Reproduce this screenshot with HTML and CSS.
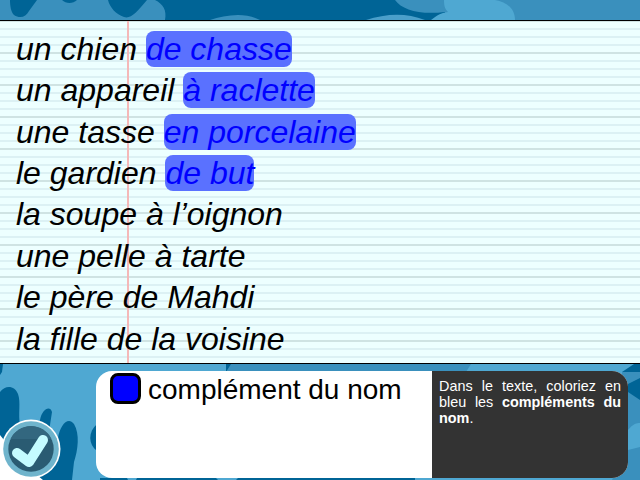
FILE: index.html
```html
<!DOCTYPE html>
<html>
   <head>
      <meta charset="UTF-8">
      <title>Compléments du nom</title>
      <link rel="stylesheet" href="styles.css">
   </head>
   <body>
      <svg class="camo" width="640" height="480" viewBox="0 0 640 480">
         <rect width="640" height="480" fill="#006496"/>
         <!-- top strip -->
         <path d="M0 0 L10 0 C10 6 11 12 14 15 C20 19 26 17 29 11 L37 0 L62 0 C66 4 73 4 77 0 L108 0 C110 8 116 14 124 17 C131 19 136 13 147 0 L155 0 C163 4 167 10 165 20 L0 20 Z" fill="#3a90bd"/>
         <path d="M210 20 C225 15 245 12 260 20 Z" fill="#3a90bd"/>
         <path d="M366 20 C385 14 405 12 425 20 Z" fill="#4a9fca"/>
         <path d="M395 0 C402 10 420 15 445 12 L445 20 L640 20 L640 0 Z" fill="#3a90bd"/>
         <path d="M444 0 C444 6 445 9 448 12 C440 13 438 15 431 20 L515 20 C515 8 506 2 495 0 Z" fill="#4fa8d2"/>
         <!-- bottom strip -->
         <rect y="364" width="640" height="116" fill="#4fa8d2"/>
         <path d="M0 392 C6 384 15 386 18 394 C21 402 18 414 20 425 L30 440 L38 437 L40 420 C42 409 50 405 52 412 L48 438 L58 438 C60 425 68 416 74 424 C80 434 78 450 74 462 L72 480 L0 480 Z" fill="#006496"/>
         <path d="M0 364 L3 364 L2 372 L0 375 Z" fill="#006496"/>
         <path d="M97 424 C88 432 88 444 97 451 Z" fill="#006496"/>
         <path d="M226 364 L432 364 L432 372 L226 372 Z" fill="#3a90bd"/>
         <path d="M226 372 L231 364 L226 364 Z" fill="#006496"/>
         <path d="M432 364 L471 364 L466 372 L432 372 Z" fill="#3a90bd"/>
         <path d="M100 478 L415 478 L415 480 L100 480 Z" fill="#006496"/>
         <path d="M127 478 L137 478 L136 480 L128 480 Z M216 478 L238 478 L236 480 L218 480 Z" fill="#4fa8d2"/>
         <path d="M612 480 L620 464 L640 400 L640 480 Z" fill="#3a90bd"/>
         <path d="M622 372 L640 372 L640 480 L622 480 Z" fill="#3a90bd"/>
         <path d="M622 372 L634 364 L640 364 L640 372 Z" fill="#006496"/>
         <path d="M628 384 L640 378 L640 400 L628 392 Z" fill="#006496"/>
         <path d="M628 430 C634 422 640 423 640 423 L640 447 L628 450 Z" fill="#4fa8d2"/>
         <!-- corner under the button -->
         <path d="M0 435 L4 440 L4 449 L31 470 L43 480 L0 480 Z" fill="#ffffff"/>
      </svg>
      <div class="paper">
         <div class="margin-line"></div>
         <p class="line">un chien <span class="picked">de chasse</span></p>
         <p class="line">un appareil <span class="picked">à raclette</span></p>
         <p class="line">une tasse <span class="picked">en porcelaine</span></p>
         <p class="line">le gardien <span class="picked">de but</span></p>
         <p class="line">la soupe à l’oignon</p>
         <p class="line">une pelle à tarte</p>
         <p class="line">le père de Mahdi</p>
         <p class="line">la fille de la voisine</p>
      </div>
      <div class="bottom">
         <div class="check">
            <svg width="60" height="60" viewBox="0 0 60 60">
               <circle cx="30" cy="30" r="29.5" fill="#fff"/>
               <circle cx="30" cy="30" r="27.8" fill="#6fb4cc"/>
               <circle cx="30" cy="30" r="22.7" fill="#2a5b72"/>
               <path d="M9.5 20 A22.7 22.7 0 0 1 50.5 20 Z" fill="#33677f"/>
               <path d="M16 34 L28 43 L42 21" fill="none" stroke="#c4fbff" stroke-width="10" stroke-linejoin="round" stroke-linecap="round"/>
            </svg>
         </div>
         <div class="panel">
            <div class="legend">
               <span class="swatch"></span>
               <span class="legend-label">complément du nom</span>
            </div>
            <div class="help">
               Dans le texte, coloriez en bleu les <b>compléments du nom</b>.
            </div>
         </div>
      </div>
   </body>
</html>
```

FILE: styles.css
```css
html, body
{
   margin:0; padding:0;
   width:640px; height:480px;
   overflow:hidden;
   font-family:"Liberation Sans", Arial, sans-serif;
}
body
{
   display:flex;
   flex-direction:column;
   padding-top:20px;
   box-sizing:border-box;
   position:relative;
}
.camo
{
   position:absolute;
   left:0; top:0;
}
.paper
{
   position:relative;
   height:344px;
   padding:7.8px 0 0 16px;
   box-sizing:border-box;
   border-top:1px solid black;
   border-bottom:1px solid black;
   background-color:#edffff;
   background-image:
      linear-gradient(to bottom, transparent 30px, #cfe3e3 30px, #cfe3e3 32px),
      linear-gradient(to bottom, transparent 6px, #dcf1f4 6px, #dcf1f4 8px);
   background-size:100% 32px, 100% 8px;
   background-position:0 1px, 0 1px;
}
.margin-line
{
   position:absolute;
   left:127px; top:0; bottom:0;
   width:2px;
   background:#f5b8b8;
}
.line
{
   position:relative;
   margin:0;
   font-size:32px;
   font-style:italic;
   line-height:41.4px;
   white-space:nowrap;
}
.picked
{
   color:#0000ff;
   background:#5a71ff;
   border-radius:8px;
}
.bottom
{
   position:relative;
   flex:1;
   padding:7px 12px 2px 96px;
   display:flex;
}
.check
{
   position:absolute;
   left:1px; bottom:1px;
   height:60px;
}
.panel
{
   flex:1;
   display:flex;
   border-radius:16px;
   overflow:hidden;
   background:white;
}
.legend
{
   width:336px;
   padding:2px 0 0 14px;
   box-sizing:border-box;
   display:flex;
   align-items:flex-start;
   gap:7px;
}
.swatch
{
   width:31px; height:31px;
   box-sizing:border-box;
   border:3px solid black;
   border-radius:8px;
   background:#0000ff;
}
.legend-label
{
   font-size:28px;
   line-height:33px;
}
.help
{
   flex:1;
   background:#333333;
   color:white;
   padding:7px 7px 0 7px;
   font-size:14.4px;
   line-height:16px;
   text-align:justify;
}
```
